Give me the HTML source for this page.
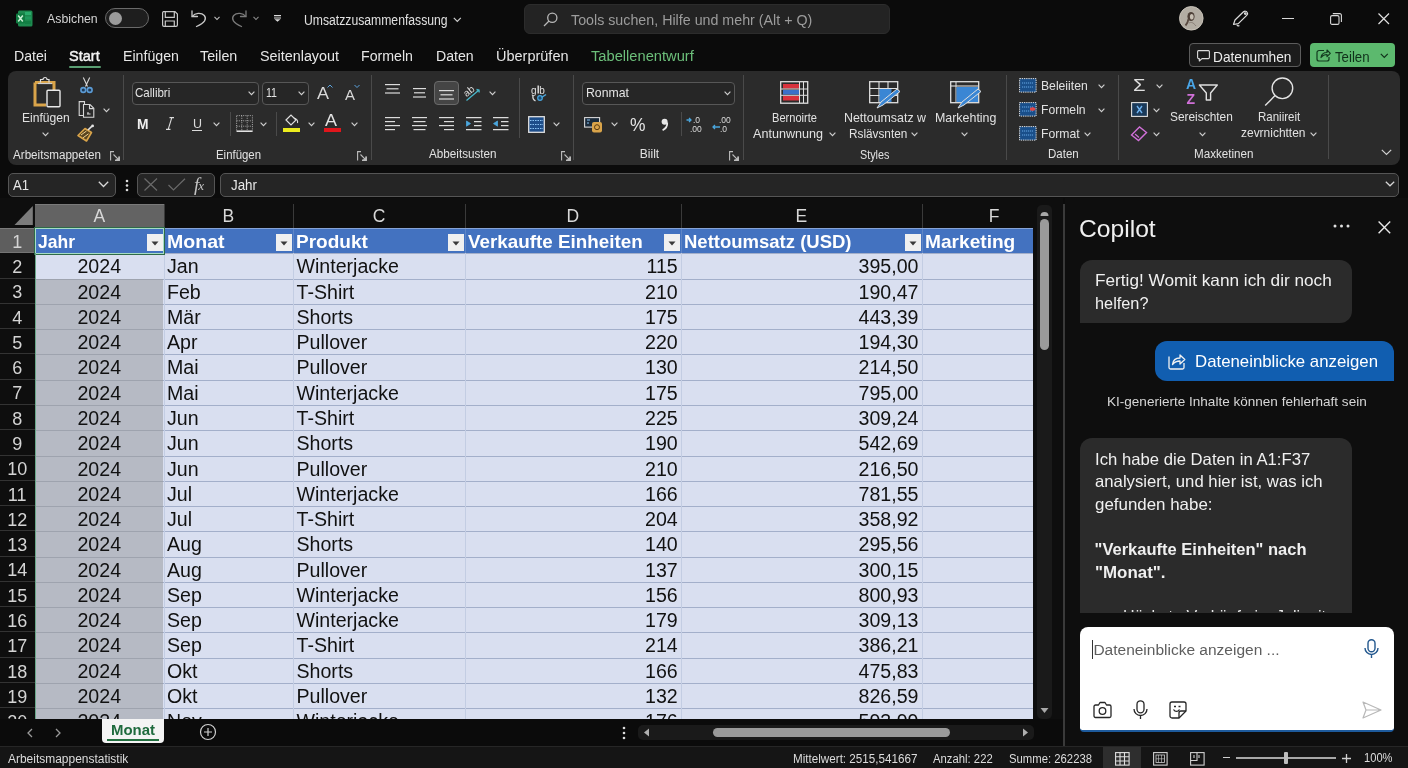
<!DOCTYPE html><html><head><meta charset="utf-8"><style>
*{margin:0;padding:0;box-sizing:border-box}
html,body{width:1408px;height:768px;overflow:hidden;background:#0b0b0b;font-family:"Liberation Sans",sans-serif;color:#e6e6e6}
.a{position:absolute}
.t{position:absolute;white-space:nowrap;line-height:1}
#w{position:absolute;left:0;top:0;width:1408px;height:768px;will-change:transform}
svg{position:absolute;overflow:visible}
</style></head><body><div id="w">
<div class="a" style="left:0;top:0;width:1408px;height:70px;background:#0b0b0b"></div>
<svg style="left:16px;top:10px" width="17" height="17">
<rect x="2" y="0.5" width="14.5" height="16" rx="1.5" fill="#1d8a4f"/>
<rect x="9" y="2" width="6" height="3" fill="#33c481" opacity="0.6"/>
<rect x="9" y="6.5" width="6" height="3" fill="#21a366" opacity="0.6"/>
<rect x="9" y="11" width="6" height="3" fill="#107c41" opacity="0.8"/>
<rect x="0" y="3.5" width="9" height="10" rx="1" fill="#107c41"/>
<path d="M2.2,5.5 L6.8,11.5 M6.8,5.5 L2.2,11.5" stroke="#c8f0d4" stroke-width="1.5"/>
</svg>
<div class="t" style="left:47.30px;top:11.84px;font-size:13.3px;color:#d4d4d4;transform:scaleX(0.9266);transform-origin:0 0;">Asbichen</div>
<div class="a" style="left:105px;top:8px;width:44px;height:20px;border-radius:10px;border:1.5px solid #6a6a6a;background:#1e1e1e"></div>
<div class="a" style="left:109px;top:11.5px;width:13px;height:13px;border-radius:50%;background:#9c9c9c"></div>
<svg style="left:162px;top:10.5px" width="16" height="16" fill="none" stroke="#c8c8c8" stroke-width="1.2">
<path d="M1.5,0.6 H13 L15.4,3 V14 A1.4,1.4 0 0 1 14,15.4 H2 A1.4,1.4 0 0 1 0.6,14 V2 A1.4,1.4 0 0 1 1.5,0.6 Z"/>
<path d="M3.3,0.6 V6.3 H12.3 V0.6"/><path d="M3.3,15.4 V10 H12.3 V15.4"/>
</svg>
<svg style="left:191px;top:10px" width="16" height="17" fill="none" stroke="#c8c8c8" stroke-width="1.3" stroke-linecap="round">
<path d="M1,1 V6.5 H6.5"/><path d="M1.3,6.3 C4,3 10,2 13.3,5.5 C16,9 14,12.5 5.5,16.5"/>
</svg>
<svg style="left:214px;top:16px" width="7" height="5"><path d="M0.5,0.8 L3,3.5 L5.5,0.8" stroke="#c0c0c0" stroke-width="1.1" fill="none"/></svg>
<svg style="left:231px;top:10px" width="16" height="17" fill="none" stroke="#7a7a7a" stroke-width="1.3" stroke-linecap="round">
<path d="M15,1 V6.5 H9.5"/><path d="M14.7,6.3 C12,3 6,2 2.7,5.5 C0,9 2,12.5 10.5,16.5"/>
</svg>
<svg style="left:252.5px;top:16px" width="7" height="5"><path d="M0.5,0.8 L3,3.5 L5.5,0.8" stroke="#8a8a8a" stroke-width="1.1" fill="none"/></svg>
<svg style="left:273.5px;top:15px" width="8" height="7"><path d="M0,0.7 H7 M0,3 H7" stroke="#dcdcdc" stroke-width="1.2"/><path d="M0.5,4.2 L3.5,6.8 L6.5,4.2 Z" fill="#dcdcdc"/></svg>
<div class="t" style="left:303.70px;top:13.15px;font-size:14px;color:#e0e0e0;transform:scaleX(0.8705);transform-origin:0 0;">Umsatzzusammenfassung</div>
<svg style="left:453px;top:16.5px" width="9" height="6"><path d="M0.8,0.8 L4.3,4.3 L7.8,0.8" stroke="#d0d0d0" stroke-width="1.2" fill="none"/></svg>
<div class="a" style="left:523.5px;top:4px;width:366px;height:29.5px;border-radius:6px;background:#232323;border:1px solid #2c2c2c"></div>
<svg style="left:543px;top:12px" width="15" height="15" fill="none" stroke="#b8b8b8" stroke-width="1.3">
<circle cx="9.3" cy="5.7" r="4.6"/><path d="M6,9 L1,14"/></svg>
<div class="t" style="left:570.80px;top:12.30px;font-size:15px;color:#9c9c9c;transform:scaleX(0.9505);transform-origin:0 0;">Tools suchen, Hilfe und mehr (Alt + Q)</div>
<svg style="left:1179px;top:6px" width="25" height="25">
<circle cx="12.3" cy="12.3" r="11.8" fill="#b3ada3" stroke="#cdc7bd" stroke-width="0.9"/>
<ellipse cx="12" cy="10.5" rx="3.6" ry="4.6" fill="#4e4038"/>
<ellipse cx="12.8" cy="10.8" rx="1.9" ry="2.8" fill="#c8c0b4"/>
<path d="M9.5,13 C9,16 8,18 6.5,19.5" stroke="#5a4a40" stroke-width="1.8" fill="none"/>
<path d="M10,17 C12,16 14,16 17,20" stroke="#8a8078" stroke-width="1" fill="none"/>
</svg>
<svg style="left:1232px;top:10px" width="17" height="17" fill="none" stroke="#dcdcdc" stroke-width="1.2" stroke-linejoin="round">
<path d="M1.5,14.5 L3,10 L11.5,1.8 C12.5,1 14.3,1 15,2 C15.8,3 15.5,4.5 14.7,5.3 L6.3,13.6 Z"/><path d="M5,14.8 C5,16 6.5,16.4 7.3,15.3"/><circle cx="13.3" cy="3.6" r="0.8"/>
</svg>
<div class="a" style="left:1282px;top:17.5px;width:11.5px;height:1.2px;background:#d8d8d8"></div>
<svg style="left:1329.5px;top:12.5px" width="12" height="12" fill="none" stroke="#d8d8d8" stroke-width="1.1">
<rect x="0.6" y="2.6" width="8.4" height="8.8" rx="1.5"/><path d="M2.8,0.6 H9.8 A1.6,1.6 0 0 1 11.4,2.2 V9"/></svg>
<svg style="left:1377.5px;top:12.5px" width="12" height="12"><path d="M0.5,0.5 L11,11 M11,0.5 L0.5,11" stroke="#e0e0e0" stroke-width="1.2"/></svg>
<div class="t" style="left:14.40px;top:48.48px;font-size:15.5px;color:#e6e6e6;transform:scaleX(0.9120);transform-origin:0 0;">Datei</div>
<div class="t" style="left:69.40px;top:48.48px;font-size:15.5px;color:#f4f4f4;transform:scaleX(0.9379);transform-origin:0 0;-webkit-text-stroke:0.45px #f4f4f4;">Start</div>
<div class="t" style="left:122.50px;top:48.48px;font-size:15.5px;color:#e6e6e6;transform:scaleX(0.9151);transform-origin:0 0;">Einfügen</div>
<div class="t" style="left:200.30px;top:48.48px;font-size:15.5px;color:#e6e6e6;transform:scaleX(0.9210);transform-origin:0 0;">Teilen</div>
<div class="t" style="left:259.70px;top:48.48px;font-size:15.5px;color:#e6e6e6;transform:scaleX(0.9260);transform-origin:0 0;">Seitenlayout</div>
<div class="t" style="left:361.10px;top:48.48px;font-size:15.5px;color:#e6e6e6;transform:scaleX(0.9147);transform-origin:0 0;">Formeln</div>
<div class="t" style="left:435.60px;top:48.48px;font-size:15.5px;color:#e6e6e6;transform:scaleX(0.9115);transform-origin:0 0;">Daten</div>
<div class="t" style="left:496.00px;top:48.48px;font-size:15.5px;color:#e6e6e6;transform:scaleX(0.9349);transform-origin:0 0;">Überprüfen</div>
<div class="t" style="left:590.80px;top:48.48px;font-size:15.5px;color:#6cbf7a;transform:scaleX(0.9468);transform-origin:0 0;">Tabellenentwurf</div>
<div class="a" style="left:69px;top:65.5px;width:32px;height:2px;border-radius:1px;background:#5a9e72"></div>
<div class="a" style="left:1189px;top:43px;width:112px;height:24px;border-radius:4px;border:1px solid #5c5c5c;background:#1c1c1c"></div>
<svg style="left:1197px;top:50px" width="13" height="12" fill="none" stroke="#dcdcdc" stroke-width="1.1" stroke-linejoin="round">
<path d="M1.5,0.6 H11.5 A1,1 0 0 1 12.4,1.6 V7.6 A1,1 0 0 1 11.5,8.6 H5 L2.3,11 V8.6 H1.5 A1,1 0 0 1 0.6,7.6 V1.6 A1,1 0 0 1 1.5,0.6 Z"/></svg>
<div class="t" style="left:1213.20px;top:48.80px;font-size:15px;color:#ececec;transform:scaleX(0.9128);transform-origin:0 0;">Datenumhen</div>
<div class="a" style="left:1309.5px;top:43px;width:85px;height:24px;border-radius:4px;background:#5cb96e"></div>
<svg style="left:1316px;top:48px" width="15" height="14" fill="none" stroke="#123a1e" stroke-width="1.2" stroke-linejoin="round">
<path d="M8,2.5 H3 A2,2 0 0 0 1,4.5 V11 A2,2 0 0 0 3,13 H11 A2,2 0 0 0 13,11 V9"/><path d="M5,9.5 C5.5,6 8,4.5 11,4.5 V2 L14.3,5.3 L11,8.6 V6.5 C8.5,6.5 6.5,7.5 5,9.5 Z"/></svg>
<div class="t" style="left:1334.80px;top:48.80px;font-size:15px;color:#10301a;transform:scaleX(0.8828);transform-origin:0 0;">Teilen</div>
<svg style="left:1380px;top:53px" width="9" height="6"><path d="M0.8,0.8 L4.3,4.3 L7.8,0.8" stroke="#10301a" stroke-width="1.2" fill="none"/></svg>
<div class="a" style="left:8px;top:70.5px;width:1392px;height:94px;border-radius:8px;background:#2b2b2b"></div>
<svg style="left:33px;top:77px" width="29" height="31">
<path d="M2,5.5 H21 V14 M2,5.5 V28 H13" stroke="#d9a44a" stroke-width="3" fill="none"/>
<path d="M7.5,5.5 V2.5 H10 A2,2 0 0 1 14,2.5 H16 V5.5" stroke="#e0e0e0" stroke-width="1.2" fill="none"/>
<path d="M5,6.5 H19" stroke="#cfcfcf" stroke-width="1.2"/>
<rect x="14" y="13.3" width="13" height="16.5" rx="1" stroke="#e8e8e8" stroke-width="1.4" fill="#2c2c2c"/>
</svg>
<div class="t" style="left:21.70px;top:110.70px;font-size:13px;color:#e2e2e2;transform:scaleX(0.9294);transform-origin:0 0;">Einfügen</div>
<svg style="left:42px;top:131.5px" width="7" height="5"><path d="M0.6,0.6 L3.5,3.6 L6.4,0.6" stroke="#cfcfcf" stroke-width="1.15" fill="none"/></svg>
<svg style="left:80px;top:77px" width="13" height="17" fill="none">
<path d="M3.3,0.5 L7.5,9.5 M9.7,0.5 L5.5,9.5" stroke="#d8d8d8" stroke-width="1.1"/>
<circle cx="3.3" cy="13" r="2.4" fill="#1e3a58" stroke="#5b9bd5" stroke-width="1.6"/><circle cx="9.7" cy="13" r="2.4" fill="#1e3a58" stroke="#5b9bd5" stroke-width="1.6"/>
</svg>
<svg style="left:78px;top:101px" width="17" height="17" fill="none" stroke="#d8d8d8" stroke-width="1.1">
<path d="M5,14.5 H1.2 V0.6 H6.5 V3"/><path d="M5.5,3.5 H12 L15.8,7.3 V16.2 H5.5 Z"/><path d="M11.5,3.8 V7.6 H15.5"/><path d="M9,13 H12.5 M10,11 V13"/>
</svg>
<svg style="left:102.5px;top:108px" width="7" height="5"><path d="M0.6,0.6 L3.5,3.6 L6.4,0.6" stroke="#cfcfcf" stroke-width="1.15" fill="none"/></svg>
<svg style="left:77px;top:124px" width="18" height="18">
<path d="M1,11.5 L8,4.5 L14.5,8.5 L9.5,17 Z" stroke="#d9a44a" stroke-width="1.6" fill="#5a4520" stroke-linejoin="round"/>
<path d="M4,11 L9.5,7 M6,13.8 L11.5,9.8" stroke="#f0d090" stroke-width="1"/>
<path d="M11,6 L15,2.2" stroke="#e4e4e4" stroke-width="1.7"/><circle cx="15.6" cy="1.9" r="1.4" fill="#e4e4e4"/>
</svg>
<div class="t" style="left:12.70px;top:148.54px;font-size:12px;color:#e2e2e2;transform:scaleX(0.9700);transform-origin:0 0;">Arbeitsmappeten</div>
<svg style="left:110px;top:151px" width="10" height="10" fill="none" stroke="#bdbdbd" stroke-width="1.1">
<path d="M0.6,9.4 V0.6 H4"/><path d="M9.4,5.5 V9.4 H5"/><path d="M3.5,3.5 L8.8,8.8 M8.8,5.6 V8.8 H5.6"/></svg>
<div class="a" style="left:122.5px;top:74.5px;width:1px;height:85.5px;background:#4a4a4a"></div>
<div class="a" style="left:131.5px;top:81.5px;width:127px;height:23px;border-radius:4px;border:1px solid #575757;background:#262626"></div>
<div class="t" style="left:134.50px;top:87.13px;font-size:12.6px;color:#e4e4e4;transform:scaleX(0.9167);transform-origin:0 0;">Callibri</div>
<svg style="left:248px;top:91px" width="7" height="5"><path d="M0.6,0.6 L3.5,3.6 L6.4,0.6" stroke="#cfcfcf" stroke-width="1.15" fill="none"/></svg>
<div class="a" style="left:262px;top:81.5px;width:46.5px;height:23px;border-radius:4px;border:1px solid #575757;background:#262626"></div>
<div class="t" style="left:266.30px;top:87.13px;font-size:12.6px;color:#e4e4e4;transform:scaleX(0.8410);transform-origin:0 0;">11</div>
<svg style="left:297.5px;top:91px" width="7" height="5"><path d="M0.6,0.6 L3.5,3.6 L6.4,0.6" stroke="#cfcfcf" stroke-width="1.15" fill="none"/></svg>
<div class="t" style="left:316.50px;top:85.11px;font-size:17px;color:#d8d8d8;transform:scaleX(1.0582);transform-origin:0 0;">A</div>
<svg style="left:327px;top:84px" width="6" height="5"><path d="M0.5,1 L3,3.5 L5.5,1" stroke="#5ba3dd" stroke-width="1" fill="none" transform="rotate(180 3 2.25)"/></svg>
<div class="t" style="left:345.00px;top:87.65px;font-size:14px;color:#d8d8d8;transform:scaleX(1.0708);transform-origin:0 0;">A</div>
<svg style="left:354px;top:84px" width="6" height="5"><path d="M0.5,1 L3,3.5 L5.5,1" stroke="#5ba3dd" stroke-width="1" fill="none"/></svg>
<div class="t" style="left:137.00px;top:116.65px;font-size:14px;color:#f0f0f0;font-weight:bold;transform:scaleX(0.9861);transform-origin:0 0;">M</div>
<svg style="left:165px;top:117px" width="10" height="13"><path d="M4.5,0.6 H9 M1,12.4 H5.5 M6.8,0.6 L3.2,12.4" stroke="#dcdcdc" stroke-width="1.1" fill="none"/></svg>
<div class="t" style="left:192.50px;top:116.50px;font-size:13px;color:#dcdcdc;transform:scaleX(0.9586);transform-origin:0 0;">U</div>
<div class="a" style="left:191.5px;top:130px;width:10px;height:1.2px;background:#dcdcdc"></div>
<svg style="left:213px;top:122px" width="7" height="5"><path d="M0.6,0.6 L3.5,3.6 L6.4,0.6" stroke="#cfcfcf" stroke-width="1.15" fill="none"/></svg>
<div class="a" style="left:229.5px;top:112px;width:1px;height:24px;background:#4a4a4a"></div>
<svg style="left:235.5px;top:115px" width="17" height="17" fill="none">
<path d="M0.6,0.6 H16.4 V16.4 H0.6 Z M5.8,0.6 V16.4 M11.2,0.6 V16.4 M0.6,5.8 H16.4 M0.6,11.2 H16.4" stroke="#b8b8b8" stroke-width="0.9" stroke-dasharray="1 1.2"/>
<path d="M0.6,16.2 H16.4" stroke="#e8e8e8" stroke-width="1.5"/></svg>
<svg style="left:259.5px;top:122px" width="7" height="5"><path d="M0.6,0.6 L3.5,3.6 L6.4,0.6" stroke="#cfcfcf" stroke-width="1.15" fill="none"/></svg>
<div class="a" style="left:275.5px;top:112px;width:1px;height:24px;background:#4a4a4a"></div>
<svg style="left:283px;top:113px" width="18" height="20">
<path d="M3,7 L8,2 L13,7 L8,12 Z" stroke="#e0e0e0" stroke-width="1.2" fill="none"/><path d="M11,5 C14,6 15,8 14.5,10" stroke="#e0e0e0" stroke-width="1.1" fill="none"/>
<rect x="0" y="15" width="17" height="4" fill="#ecec1e"/></svg>
<svg style="left:307.5px;top:122px" width="7" height="5"><path d="M0.6,0.6 L3.5,3.6 L6.4,0.6" stroke="#cfcfcf" stroke-width="1.15" fill="none"/></svg>
<div class="t" style="left:325.00px;top:113.46px;font-size:16px;color:#e4e4e4;transform:scaleX(1.1244);transform-origin:0 0;">A</div>
<div class="a" style="left:324px;top:128px;width:17px;height:4px;background:#e0161c"></div>
<svg style="left:350.5px;top:122px" width="7" height="5"><path d="M0.6,0.6 L3.5,3.6 L6.4,0.6" stroke="#cfcfcf" stroke-width="1.15" fill="none"/></svg>
<div class="t" style="left:215.50px;top:148.74px;font-size:12px;color:#e2e2e2;transform:scaleX(0.9499);transform-origin:0 0;">Einfügen</div>
<svg style="left:357px;top:151px" width="10" height="10" fill="none" stroke="#bdbdbd" stroke-width="1.1">
<path d="M0.6,9.4 V0.6 H4"/><path d="M9.4,5.5 V9.4 H5"/><path d="M3.5,3.5 L8.8,8.8 M8.8,5.6 V8.8 H5.6"/></svg>
<div class="a" style="left:371px;top:74.5px;width:1px;height:85.5px;background:#4a4a4a"></div>
<svg style="left:384.5px;top:84px" width="15" height="14.600000000000001" fill="none" stroke="#dcdcdc" stroke-width="1.2"><path d="M0.0,0.6 H15.0"/><path d="M1.5,4.8 H13.5"/><path d="M0.0,9.0 H15.0"/></svg>
<svg style="left:411.5px;top:87.5px" width="15" height="14.600000000000001" fill="none" stroke="#dcdcdc" stroke-width="1.2"><path d="M1.0,0.6 H14.0"/><path d="M2.0,4.8 H13.0"/><path d="M1.0,9.0 H14.0"/></svg>
<div class="a" style="left:433.5px;top:81px;width:25px;height:24px;border-radius:4px;border:1px solid #6a6a6a;background:#454545"></div>
<svg style="left:438.5px;top:90px" width="15" height="14.600000000000001" fill="none" stroke="#dcdcdc" stroke-width="1.2"><path d="M0.0,0.6 H15.0"/><path d="M1.5,4.8 H13.5"/><path d="M0.0,9.0 H15.0"/></svg>
<svg style="left:464px;top:84px" width="18" height="18" fill="none">
<text x="0" y="10" font-size="10" fill="#e0e0e0" font-family="Liberation Sans" transform="rotate(-38 6 8)">ab</text>
<path d="M2.5,16.5 L15,6 M12.5,5.5 L15,6 L15.2,8.5" stroke="#49b6c9" stroke-width="1.3"/></svg>
<svg style="left:489px;top:91px" width="7" height="5"><path d="M0.6,0.6 L3.5,3.6 L6.4,0.6" stroke="#cfcfcf" stroke-width="1.15" fill="none"/></svg>
<svg style="left:384.5px;top:117px" width="15" height="18.0" fill="none" stroke="#dcdcdc" stroke-width="1.2"><path d="M0.0,0.6 H15.0"/><path d="M0.0,4.6 H10.0"/><path d="M0.0,8.6 H15.0"/><path d="M0.0,12.6 H10.0"/></svg>
<svg style="left:411.5px;top:117px" width="15" height="18.0" fill="none" stroke="#dcdcdc" stroke-width="1.2"><path d="M0.0,0.6 H15.0"/><path d="M1.5,4.6 H13.5"/><path d="M0.0,8.6 H15.0"/><path d="M1.5,12.6 H13.5"/></svg>
<svg style="left:438.5px;top:117px" width="15" height="18.0" fill="none" stroke="#dcdcdc" stroke-width="1.2"><path d="M0.0,0.6 H15.0"/><path d="M5.0,4.6 H15.0"/><path d="M0.0,8.6 H15.0"/><path d="M5.0,12.6 H15.0"/></svg>
<svg style="left:466px;top:117px" width="16" height="15" fill="none" stroke="#dcdcdc" stroke-width="1.2">
<path d="M0,0.6 H15.5 M8,4.6 H15.5 M8,8.6 H15.5 M0,12.6 H15.5"/><path d="M0.5,4 L4.5,6.6 L0.5,9.2 Z" fill="#4aa6dd" stroke="#4aa6dd" stroke-width="0.8"/></svg>
<svg style="left:493px;top:117px" width="16" height="15" fill="none" stroke="#dcdcdc" stroke-width="1.2">
<path d="M0,0.6 H15.5 M8,4.6 H15.5 M8,8.6 H15.5 M0,12.6 H15.5"/><path d="M4.5,4 L0.5,6.6 L4.5,9.2 Z" fill="#4aa6dd" stroke="#4aa6dd" stroke-width="0.8"/></svg>
<div class="a" style="left:518.5px;top:78px;width:1px;height:60px;background:#4a4a4a"></div>
<svg style="left:530.5px;top:85px" width="16" height="17" fill="none">
<text x="0" y="8.5" font-size="10" fill="#e0e0e0" font-family="Liberation Sans">g</text><text x="8.2" y="8.5" font-size="10" fill="#e0e0e0" font-family="Liberation Sans">b</text>
<path d="M7.2,0.5 V8.5" stroke="#f0f0f0" stroke-width="1.3"/>
<path d="M2.2,10.5 A4,4 0 0 0 4.5,15.8" stroke="#e0e0e0" stroke-width="1.3"/>
<circle cx="9" cy="13" r="2.3" fill="#1a4a70" stroke="#4aa6dd" stroke-width="1.2"/><path d="M10.5,12.5 L15,9.5" stroke="#4aa6dd" stroke-width="1.5"/></svg>
<svg style="left:528px;top:115.5px" width="17" height="17" fill="none">
<rect x="0.7" y="0.7" width="15.6" height="15.6" stroke="#e0e0e0" stroke-width="1.3" fill="#1e4e8a"/>
<path d="M2,4.5 H15 M2,8.5 H15 M2,12.5 H15" stroke="#8cc4f4" stroke-width="1" stroke-dasharray="1.5 1"/></svg>
<svg style="left:553px;top:122px" width="7" height="5"><path d="M0.6,0.6 L3.5,3.6 L6.4,0.6" stroke="#cfcfcf" stroke-width="1.15" fill="none"/></svg>
<div class="t" style="left:429.40px;top:148.24px;font-size:12px;color:#e2e2e2;transform:scaleX(0.9743);transform-origin:0 0;">Abbeitsusten</div>
<svg style="left:561px;top:151px" width="10" height="10" fill="none" stroke="#bdbdbd" stroke-width="1.1">
<path d="M0.6,9.4 V0.6 H4"/><path d="M9.4,5.5 V9.4 H5"/><path d="M3.5,3.5 L8.8,8.8 M8.8,5.6 V8.8 H5.6"/></svg>
<div class="a" style="left:573px;top:74.5px;width:1px;height:85.5px;background:#4a4a4a"></div>
<div class="a" style="left:581.5px;top:81.5px;width:153.5px;height:23px;border-radius:4px;border:1px solid #575757;background:#262626"></div>
<div class="t" style="left:585.50px;top:87.33px;font-size:12.6px;color:#e4e4e4;transform:scaleX(0.9746);transform-origin:0 0;">Ronmat</div>
<svg style="left:724px;top:91px" width="7" height="5"><path d="M0.6,0.6 L3.5,3.6 L6.4,0.6" stroke="#cfcfcf" stroke-width="1.15" fill="none"/></svg>
<svg style="left:584px;top:117px" width="19" height="16">
<rect x="0.6" y="0.6" width="15" height="9.5" stroke="#d8d8d8" stroke-width="1.1" fill="#1a2a3a"/><path d="M3,3 H6 M3,6 H5" stroke="#8cc4f4" stroke-width="1"/>
<rect x="8" y="5" width="10" height="10.5" rx="2" fill="#d9a44a"/><circle cx="13" cy="10.2" r="2.5" stroke="#5a3a10" stroke-width="1" fill="none"/></svg>
<svg style="left:611px;top:122px" width="7" height="5"><path d="M0.6,0.6 L3.5,3.6 L6.4,0.6" stroke="#cfcfcf" stroke-width="1.15" fill="none"/></svg>
<div class="t" style="left:629.50px;top:115.76px;font-size:18px;color:#e4e4e4;transform:scaleX(0.9685);transform-origin:0 0;">%</div>
<svg style="left:660px;top:118px" width="9" height="14"><circle cx="4.6" cy="3.8" r="3" fill="#e8e8e8"/><path d="M7.2,4.5 C7.5,8 6,10.5 2.6,12.2" stroke="#e8e8e8" stroke-width="1.8" fill="none"/></svg>
<div class="a" style="left:680.5px;top:112px;width:1px;height:24px;background:#4a4a4a"></div>
<svg style="left:686px;top:115px" width="20" height="18">
<text x="7" y="8" font-size="8.5" fill="#dcdcdc" font-family="Liberation Sans">.0</text><text x="4" y="16.5" font-size="8.5" fill="#dcdcdc" font-family="Liberation Sans">.00</text>
<path d="M0.5,5 L5,5 M3,3 L5,5 L3,7" stroke="#4aa6dd" stroke-width="1.3" fill="none"/></svg>
<svg style="left:712px;top:115px" width="20" height="18">
<text x="7" y="8" font-size="8.5" fill="#dcdcdc" font-family="Liberation Sans">.00</text><text x="8" y="16.5" font-size="8.5" fill="#dcdcdc" font-family="Liberation Sans">.0</text>
<path d="M1,12 L8,12 M3,10 L1,12 L3,14" stroke="#4aa6dd" stroke-width="1.3" fill="none"/></svg>
<div class="t" style="left:639.80px;top:147.94px;font-size:12px;color:#e2e2e2;">Biilt</div>
<svg style="left:729px;top:151px" width="10" height="10" fill="none" stroke="#bdbdbd" stroke-width="1.1">
<path d="M0.6,9.4 V0.6 H4"/><path d="M9.4,5.5 V9.4 H5"/><path d="M3.5,3.5 L8.8,8.8 M8.8,5.6 V8.8 H5.6"/></svg>
<div class="a" style="left:743px;top:74.5px;width:1px;height:85.5px;background:#4a4a4a"></div>
<svg style="left:780px;top:80.5px" width="29" height="23">
<rect x="0.7" y="0.7" width="27" height="21.5" stroke="#e0e0e0" stroke-width="1.3" fill="#2a2a2a"/>
<rect x="3" y="3" width="16" height="4.5" fill="#d8323c"/><rect x="3" y="9" width="16" height="4.5" fill="#3a70c8"/><rect x="3" y="15" width="16" height="4.5" fill="#d8323c"/>
<path d="M19.5,1 V22 M23.5,1 V22 M1,8 H27.5 M1,14.3 H27.5" stroke="#e0e0e0" stroke-width="1"/></svg>
<div class="t" style="left:771.60px;top:111.66px;font-size:12.8px;color:#e2e2e2;transform:scaleX(0.8664);transform-origin:0 0;">Bernoirte</div>
<div class="t" style="left:753.40px;top:127.66px;font-size:12.8px;color:#e2e2e2;transform:scaleX(0.9835);transform-origin:0 0;">Antunwnung</div>
<svg style="left:829px;top:131.5px" width="7" height="5"><path d="M0.6,0.6 L3.5,3.6 L6.4,0.6" stroke="#cfcfcf" stroke-width="1.15" fill="none"/></svg>
<svg style="left:869px;top:80.5px" width="33" height="29">
<rect x="0.7" y="0.7" width="28" height="21" stroke="#e0e0e0" stroke-width="1.3" fill="none"/>
<path d="M1,7.5 H28.5 M1,14.5 H28.5 M10,1 V21.5 M19,1 V21.5" stroke="#e0e0e0" stroke-width="1.1"/>
<rect x="10.5" y="8" width="12" height="13" fill="#3a86d4"/>
<path d="M8,27 L12,21 L28,8 L31,10.5 L14,24 Z" fill="#3a86d4" stroke="#e0e0e0" stroke-width="1"/></svg>
<div class="t" style="left:843.50px;top:111.66px;font-size:12.8px;color:#e2e2e2;transform:scaleX(0.9687);transform-origin:0 0;">Nettoumsatz w</div>
<div class="t" style="left:848.90px;top:127.66px;font-size:12.8px;color:#e2e2e2;transform:scaleX(0.9207);transform-origin:0 0;">Rslävsnten</div>
<svg style="left:911px;top:131.5px" width="7" height="5"><path d="M0.6,0.6 L3.5,3.6 L6.4,0.6" stroke="#cfcfcf" stroke-width="1.15" fill="none"/></svg>
<svg style="left:950px;top:80.5px" width="33" height="29">
<rect x="0.7" y="0.7" width="28" height="21" stroke="#e0e0e0" stroke-width="1.3" fill="none"/>
<path d="M1,5 H28.5" stroke="#e0e0e0" stroke-width="1.1"/><path d="M6,1 V21.5" stroke="#e0e0e0" stroke-width="1"/>
<rect x="6.5" y="6" width="21.5" height="15" fill="#3a86d4"/>
<path d="M8,27 L12,21 L28,8 L31,10.5 L14,24 Z" fill="#3a86d4" stroke="#e0e0e0" stroke-width="1"/></svg>
<div class="t" style="left:934.60px;top:111.66px;font-size:12.8px;color:#e2e2e2;transform:scaleX(0.9697);transform-origin:0 0;">Markehting</div>
<svg style="left:961px;top:131.5px" width="7" height="5"><path d="M0.6,0.6 L3.5,3.6 L6.4,0.6" stroke="#cfcfcf" stroke-width="1.15" fill="none"/></svg>
<div class="t" style="left:859.80px;top:148.74px;font-size:12px;color:#e2e2e2;transform:scaleX(0.8997);transform-origin:0 0;">Styles</div>
<div class="a" style="left:1006px;top:74.5px;width:1px;height:85.5px;background:#4a4a4a"></div>
<svg style="left:1019px;top:78px" width="18" height="15">
<rect x="0.6" y="0.6" width="16.5" height="13.5" stroke="#e0e0e0" stroke-width="1" stroke-dasharray="1.3 0.9" fill="#1a4f8a"/>
<path d="M3,5 H14 M3,9 H14" stroke="#6fb2ef" stroke-width="0.9" stroke-dasharray="1.2 0.8"/></svg>
<div class="t" style="left:1040.60px;top:79.20px;font-size:13px;color:#e0e0e0;transform:scaleX(0.9364);transform-origin:0 0;">Beleiiten</div>
<svg style="left:1098px;top:83.5px" width="7" height="5"><path d="M0.6,0.6 L3.5,3.6 L6.4,0.6" stroke="#cfcfcf" stroke-width="1.15" fill="none"/></svg>
<svg style="left:1019px;top:102px" width="18" height="15">
<rect x="0.6" y="0.6" width="16.5" height="13.5" stroke="#e0e0e0" stroke-width="1" stroke-dasharray="1.3 0.9" fill="#1a4f8a"/>
<path d="M3,5 H14 M3,9 H14" stroke="#6fb2ef" stroke-width="0.9" stroke-dasharray="1.2 0.8"/><path d="M11,6 C13,4.5 16,5 16.5,7 C16,9 13,9.5 11,8 Z" fill="#e0484a"/></svg>
<div class="t" style="left:1040.60px;top:103.20px;font-size:13px;color:#e0e0e0;transform:scaleX(0.9354);transform-origin:0 0;">Formeln</div>
<svg style="left:1098px;top:107.5px" width="7" height="5"><path d="M0.6,0.6 L3.5,3.6 L6.4,0.6" stroke="#cfcfcf" stroke-width="1.15" fill="none"/></svg>
<svg style="left:1019px;top:126px" width="18" height="15">
<rect x="0.6" y="0.6" width="16.5" height="13.5" stroke="#e0e0e0" stroke-width="1" stroke-dasharray="1.3 0.9" fill="#1a4f8a"/>
<path d="M3,5 H14 M3,9 H14" stroke="#6fb2ef" stroke-width="0.9" stroke-dasharray="1.2 0.8"/></svg>
<div class="t" style="left:1040.60px;top:127.10px;font-size:13px;color:#e0e0e0;transform:scaleX(0.9399);transform-origin:0 0;">Format</div>
<svg style="left:1084px;top:131.5px" width="7" height="5"><path d="M0.6,0.6 L3.5,3.6 L6.4,0.6" stroke="#cfcfcf" stroke-width="1.15" fill="none"/></svg>
<div class="t" style="left:1047.70px;top:148.44px;font-size:12px;color:#e2e2e2;transform:scaleX(0.9587);transform-origin:0 0;">Daten</div>
<div class="a" style="left:1118px;top:74.5px;width:1px;height:85.5px;background:#4a4a4a"></div>
<div class="t" style="left:1132.50px;top:78.46px;font-size:16px;color:#e0e0e0;transform:scaleX(1.2637);transform-origin:0 0;">Σ</div>
<svg style="left:1155.5px;top:83.5px" width="7" height="5"><path d="M0.6,0.6 L3.5,3.6 L6.4,0.6" stroke="#cfcfcf" stroke-width="1.15" fill="none"/></svg>
<svg style="left:1131px;top:101.5px" width="17" height="15">
<rect x="0.6" y="0.6" width="15.8" height="13.8" stroke="#e0e0e0" stroke-width="1.1" fill="#1a3a5a"/>
<path d="M6,4 L11,11 M11,4 L6,11" stroke="#6fb2ef" stroke-width="1.4"/></svg>
<svg style="left:1153px;top:107.5px" width="7" height="5"><path d="M0.6,0.6 L3.5,3.6 L6.4,0.6" stroke="#cfcfcf" stroke-width="1.15" fill="none"/></svg>
<svg style="left:1130px;top:125px" width="18" height="17">
<path d="M1.5,10 L9.5,2 L16.5,7.5 L8.5,15.5 Z" stroke="#d070d8" stroke-width="1.4" fill="none"/><path d="M5,9 L9,12.5" stroke="#d070d8" stroke-width="1.2"/></svg>
<svg style="left:1153px;top:131.5px" width="7" height="5"><path d="M0.6,0.6 L3.5,3.6 L6.4,0.6" stroke="#cfcfcf" stroke-width="1.15" fill="none"/></svg>
<svg style="left:1186px;top:76px" width="35" height="30">
<text x="0" y="13" font-size="14" font-weight="bold" fill="#4aa6e8" font-family="Liberation Sans">A</text>
<text x="0.5" y="27.5" font-size="14" font-weight="bold" fill="#d070d8" font-family="Liberation Sans">Z</text>
<path d="M13.4,9 H31.3 L24.6,17 V24 H20.3 V17 Z" stroke="#e0e0e0" stroke-width="1.4" fill="none" stroke-linejoin="round"/></svg>
<div class="t" style="left:1170.40px;top:110.56px;font-size:12.8px;color:#e2e2e2;transform:scaleX(0.9290);transform-origin:0 0;">Sereischten</div>
<svg style="left:1198.5px;top:131.5px" width="7" height="5"><path d="M0.6,0.6 L3.5,3.6 L6.4,0.6" stroke="#cfcfcf" stroke-width="1.15" fill="none"/></svg>
<svg style="left:1264px;top:76px" width="30" height="31" fill="none" stroke="#e4e4e4" stroke-width="1.4">
<circle cx="18.4" cy="12.3" r="10.3"/><path d="M11,19.6 L1.2,29.5"/></svg>
<div class="t" style="left:1258.00px;top:111.46px;font-size:12.8px;color:#e2e2e2;transform:scaleX(0.8988);transform-origin:0 0;">Raniireit</div>
<div class="t" style="left:1241.10px;top:127.46px;font-size:12.8px;color:#e2e2e2;transform:scaleX(0.9346);transform-origin:0 0;">zevrnichtten</div>
<svg style="left:1310px;top:131.5px" width="7" height="5"><path d="M0.6,0.6 L3.5,3.6 L6.4,0.6" stroke="#cfcfcf" stroke-width="1.15" fill="none"/></svg>
<div class="t" style="left:1193.60px;top:148.04px;font-size:12px;color:#e2e2e2;transform:scaleX(0.9696);transform-origin:0 0;">Maxketinen</div>
<div class="a" style="left:1328px;top:74.5px;width:1px;height:84.5px;background:#4a4a4a"></div>
<svg style="left:1380.5px;top:148.5px" width="11" height="7"><path d="M0.8,0.8 L5.5,5.5 L10.2,0.8" stroke="#d0d0d0" stroke-width="1.2" fill="none"/></svg>
<div class="a" style="left:8px;top:172.5px;width:107.5px;height:24px;border-radius:5px;border:1px solid #555;background:#252525"></div>
<div class="t" style="left:13.00px;top:178.15px;font-size:14px;color:#e8e8e8;transform:scaleX(0.9343);transform-origin:0 0;">A1</div>
<svg style="left:98px;top:181px" width="11" height="7"><path d="M0.8,0.8 L5.5,5.5 L10.2,0.8" stroke="#d8d8d8" stroke-width="1.3" fill="none"/></svg>
<svg style="left:124.5px;top:178.5px" width="4" height="13"><circle cx="2" cy="2" r="1.3" fill="#dcdcdc"/><circle cx="2" cy="6.5" r="1.3" fill="#dcdcdc"/><circle cx="2" cy="11" r="1.3" fill="#dcdcdc"/></svg>
<div class="a" style="left:137px;top:172.5px;width:78px;height:24px;border-radius:5px;border:1px solid #555;background:#252525"></div>
<svg style="left:144px;top:178px" width="14" height="13"><path d="M0.5,0.5 L13,12.5 M13,0.5 L0.5,12.5" stroke="#6a6a6a" stroke-width="1.2"/></svg>
<svg style="left:167.5px;top:178px" width="18" height="13"><path d="M0.5,7 L5.5,12 L17,0.8" stroke="#6a6a6a" stroke-width="1.2" fill="none"/></svg>
<div class="t" style="left:194px;top:175px;font-size:19px;color:#c4c4c4;font-family:'Liberation Serif',serif;font-style:italic">f<span style="font-size:13px;position:relative;left:-1px;top:-1px">x</span></div>
<div class="a" style="left:220px;top:172.5px;width:1179px;height:24px;border-radius:5px;border:1px solid #555;background:#252525"></div>
<div class="t" style="left:231.00px;top:178.15px;font-size:14px;color:#e8e8e8;transform:scaleX(0.9546);transform-origin:0 0;">Jahr</div>
<svg style="left:1385px;top:181px" width="10" height="6"><path d="M0.8,0.8 L5,4.8 L9.2,0.8" stroke="#d8d8d8" stroke-width="1.2" fill="none"/></svg>
<div class="a" style="left:0;top:198px;width:1063px;height:521px;background:#0e0e0e"></div>
<div class="a" style="left:35px;top:203.5px;width:128.5px;height:24.5px;background:#636363;border-top:1px solid #7a7a7a;border-bottom:1px solid #3d6e50"></div>
<div class="t" style="left:93.41px;top:208.39px;font-size:17.5px;color:#d8d8d8;">A</div>
<div class="a" style="left:163.5px;top:203.5px;width:129.5px;height:24.5px;background:#0e0e0e"></div>
<div class="t" style="left:222.41px;top:208.39px;font-size:17.5px;color:#d8d8d8;">B</div>
<div class="a" style="left:163.5px;top:204px;width:1px;height:24px;background:#3a3a3a"></div>
<div class="a" style="left:293px;top:203.5px;width:172px;height:24.5px;background:#0e0e0e"></div>
<div class="t" style="left:372.68px;top:208.39px;font-size:17.5px;color:#d8d8d8;">C</div>
<div class="a" style="left:293px;top:204px;width:1px;height:24px;background:#3a3a3a"></div>
<div class="a" style="left:465px;top:203.5px;width:215.5px;height:24.5px;background:#0e0e0e"></div>
<div class="t" style="left:566.43px;top:208.39px;font-size:17.5px;color:#d8d8d8;">D</div>
<div class="a" style="left:465px;top:204px;width:1px;height:24px;background:#3a3a3a"></div>
<div class="a" style="left:680.5px;top:203.5px;width:241.5px;height:24.5px;background:#0e0e0e"></div>
<div class="t" style="left:795.41px;top:208.39px;font-size:17.5px;color:#d8d8d8;">E</div>
<div class="a" style="left:680.5px;top:204px;width:1px;height:24px;background:#3a3a3a"></div>
<div class="a" style="left:922px;top:203.5px;width:111px;height:24.5px;background:#0e0e0e"></div>
<div class="t" style="left:988.65px;top:208.39px;font-size:17.5px;color:#d8d8d8;">F</div>
<div class="a" style="left:922px;top:204px;width:1px;height:24px;background:#3a3a3a"></div>
<svg style="left:0;top:203px" width="35" height="25"><polygon points="32.8,3 32.8,22 14.5,22" fill="#7c7c7c"/></svg>
<div class="a" style="left:0;top:228.00px;width:35px;height:25.28px;background:#5e5e5e;border-top:1px solid #7a7a7a;border-bottom:1px solid #747474"></div>
<div class="t" style="left:12.19px;top:232.76px;font-size:18px;color:#d4d4d4;">1</div>
<div class="a" style="left:0;top:253.28px;width:35px;height:25.28px;background:#0e0e0e;border-bottom:1px solid #333"></div>
<div class="t" style="left:12.19px;top:258.04px;font-size:18px;color:#d4d4d4;">2</div>
<div class="a" style="left:0;top:278.56px;width:35px;height:25.28px;background:#0e0e0e;border-bottom:1px solid #333"></div>
<div class="t" style="left:12.19px;top:283.32px;font-size:18px;color:#d4d4d4;">3</div>
<div class="a" style="left:0;top:303.84px;width:35px;height:25.28px;background:#0e0e0e;border-bottom:1px solid #333"></div>
<div class="t" style="left:12.19px;top:308.60px;font-size:18px;color:#d4d4d4;">4</div>
<div class="a" style="left:0;top:329.12px;width:35px;height:25.28px;background:#0e0e0e;border-bottom:1px solid #333"></div>
<div class="t" style="left:12.19px;top:333.88px;font-size:18px;color:#d4d4d4;">5</div>
<div class="a" style="left:0;top:354.40px;width:35px;height:25.28px;background:#0e0e0e;border-bottom:1px solid #333"></div>
<div class="t" style="left:12.19px;top:359.16px;font-size:18px;color:#d4d4d4;">6</div>
<div class="a" style="left:0;top:379.68px;width:35px;height:25.28px;background:#0e0e0e;border-bottom:1px solid #333"></div>
<div class="t" style="left:12.19px;top:384.44px;font-size:18px;color:#d4d4d4;">7</div>
<div class="a" style="left:0;top:404.96px;width:35px;height:25.28px;background:#0e0e0e;border-bottom:1px solid #333"></div>
<div class="t" style="left:12.19px;top:409.72px;font-size:18px;color:#d4d4d4;">8</div>
<div class="a" style="left:0;top:430.24px;width:35px;height:25.28px;background:#0e0e0e;border-bottom:1px solid #333"></div>
<div class="t" style="left:12.19px;top:435.00px;font-size:18px;color:#d4d4d4;">9</div>
<div class="a" style="left:0;top:455.52px;width:35px;height:25.28px;background:#0e0e0e;border-bottom:1px solid #333"></div>
<div class="t" style="left:7.19px;top:460.28px;font-size:18px;color:#d4d4d4;">10</div>
<div class="a" style="left:0;top:480.80px;width:35px;height:25.28px;background:#0e0e0e;border-bottom:1px solid #333"></div>
<div class="t" style="left:7.86px;top:485.56px;font-size:18px;color:#d4d4d4;">11</div>
<div class="a" style="left:0;top:506.08px;width:35px;height:25.28px;background:#0e0e0e;border-bottom:1px solid #333"></div>
<div class="t" style="left:7.19px;top:510.84px;font-size:18px;color:#d4d4d4;">12</div>
<div class="a" style="left:0;top:531.36px;width:35px;height:25.28px;background:#0e0e0e;border-bottom:1px solid #333"></div>
<div class="t" style="left:7.19px;top:536.12px;font-size:18px;color:#d4d4d4;">13</div>
<div class="a" style="left:0;top:556.64px;width:35px;height:25.28px;background:#0e0e0e;border-bottom:1px solid #333"></div>
<div class="t" style="left:7.19px;top:561.40px;font-size:18px;color:#d4d4d4;">14</div>
<div class="a" style="left:0;top:581.92px;width:35px;height:25.28px;background:#0e0e0e;border-bottom:1px solid #333"></div>
<div class="t" style="left:7.19px;top:586.68px;font-size:18px;color:#d4d4d4;">15</div>
<div class="a" style="left:0;top:607.20px;width:35px;height:25.28px;background:#0e0e0e;border-bottom:1px solid #333"></div>
<div class="t" style="left:7.19px;top:611.96px;font-size:18px;color:#d4d4d4;">16</div>
<div class="a" style="left:0;top:632.48px;width:35px;height:25.28px;background:#0e0e0e;border-bottom:1px solid #333"></div>
<div class="t" style="left:7.19px;top:637.24px;font-size:18px;color:#d4d4d4;">17</div>
<div class="a" style="left:0;top:657.76px;width:35px;height:25.28px;background:#0e0e0e;border-bottom:1px solid #333"></div>
<div class="t" style="left:7.19px;top:662.52px;font-size:18px;color:#d4d4d4;">18</div>
<div class="a" style="left:0;top:683.04px;width:35px;height:25.28px;background:#0e0e0e;border-bottom:1px solid #333"></div>
<div class="t" style="left:7.19px;top:687.80px;font-size:18px;color:#d4d4d4;">19</div>
<div class="a" style="left:0;top:708.32px;width:35px;height:25.28px;background:#0e0e0e;border-bottom:1px solid #333"></div>
<div class="t" style="left:7.19px;top:713.08px;font-size:18px;color:#d4d4d4;">20</div>
<div class="a" style="left:35px;top:228.00px;width:998px;height:25.28px;background:#4372c0;border-top:1px solid #86a3d6"></div>
<div class="a" style="left:163.5px;top:229.00px;width:1px;height:24.28px;background:#5f86c6"></div>
<div class="a" style="left:293px;top:229.00px;width:1px;height:24.28px;background:#5f86c6"></div>
<div class="a" style="left:465px;top:229.00px;width:1px;height:24.28px;background:#5f86c6"></div>
<div class="a" style="left:680.5px;top:229.00px;width:1px;height:24.28px;background:#5f86c6"></div>
<div class="a" style="left:922px;top:229.00px;width:1px;height:24.28px;background:#5f86c6"></div>
<div class="t" style="left:38.00px;top:232.32px;font-size:19px;color:#ffffff;font-weight:bold;transform:scaleX(0.9219);transform-origin:0 0;">Jahr</div>
<div class="a" style="left:146.5px;top:234.00px;width:16px;height:17px;background:#f0f0f0"></div>
<svg style="left:146.5px;top:234.00px" width="16" height="17"><polygon points="4.5,7.5 11.5,7.5 8,11.5" fill="#3a3a3a"/></svg>
<div class="t" style="left:166.50px;top:232.32px;font-size:19px;color:#ffffff;font-weight:bold;transform:scaleX(1.0280);transform-origin:0 0;">Monat</div>
<div class="a" style="left:276px;top:234.00px;width:16px;height:17px;background:#f0f0f0"></div>
<svg style="left:276px;top:234.00px" width="16" height="17"><polygon points="4.5,7.5 11.5,7.5 8,11.5" fill="#3a3a3a"/></svg>
<div class="t" style="left:296.00px;top:232.32px;font-size:19px;color:#ffffff;font-weight:bold;">Produkt</div>
<div class="a" style="left:448px;top:234.00px;width:16px;height:17px;background:#f0f0f0"></div>
<svg style="left:448px;top:234.00px" width="16" height="17"><polygon points="4.5,7.5 11.5,7.5 8,11.5" fill="#3a3a3a"/></svg>
<div class="t" style="left:468.00px;top:232.32px;font-size:19px;color:#ffffff;font-weight:bold;transform:scaleX(0.9907);transform-origin:0 0;">Verkaufte Einheiten</div>
<div class="a" style="left:663.5px;top:234.00px;width:16px;height:17px;background:#f0f0f0"></div>
<svg style="left:663.5px;top:234.00px" width="16" height="17"><polygon points="4.5,7.5 11.5,7.5 8,11.5" fill="#3a3a3a"/></svg>
<div class="t" style="left:683.50px;top:232.32px;font-size:19px;color:#ffffff;font-weight:bold;transform:scaleX(0.9735);transform-origin:0 0;">Nettoumsatz (USD)</div>
<div class="a" style="left:905px;top:234.00px;width:16px;height:17px;background:#f0f0f0"></div>
<svg style="left:905px;top:234.00px" width="16" height="17"><polygon points="4.5,7.5 11.5,7.5 8,11.5" fill="#3a3a3a"/></svg>
<div class="t" style="left:925.00px;top:232.32px;font-size:19px;color:#ffffff;font-weight:bold;transform:scaleX(1.0062);transform-origin:0 0;">Marketing</div>
<div class="a" style="left:35px;top:253.28px;width:998px;height:25.28px;background:#d9dff0;border-top:1px solid #a3afca"></div>
<div class="a" style="left:163.5px;top:253.28px;width:1px;height:25.28px;background:#c3cde3"></div>
<div class="a" style="left:293px;top:253.28px;width:1px;height:25.28px;background:#c3cde3"></div>
<div class="a" style="left:465px;top:253.28px;width:1px;height:25.28px;background:#c3cde3"></div>
<div class="a" style="left:680.5px;top:253.28px;width:1px;height:25.28px;background:#c3cde3"></div>
<div class="a" style="left:922px;top:253.28px;width:1px;height:25.28px;background:#c3cde3"></div>
<div class="t" style="left:77.45px;top:257.29px;font-size:19.6px;color:#111;">2024</div>
<div class="t" style="left:167.00px;top:257.29px;font-size:19.6px;color:#111;">Jan</div>
<div class="t" style="left:296.50px;top:257.29px;font-size:19.6px;color:#111;">Winterjacke</div>
<div class="t" style="left:646.45px;top:257.29px;font-size:19.6px;color:#111;">115</div>
<div class="t" style="left:858.55px;top:257.29px;font-size:19.6px;color:#111;">395,00</div>
<div class="a" style="left:35px;top:278.56px;width:998px;height:25.28px;background:#d9dff0;border-top:1px solid #a3afca"></div>
<div class="a" style="left:36px;top:278.56px;width:127px;height:25.28px;background:#b6bac4;border-top:1px solid #9ea3ae"></div>
<div class="a" style="left:163.5px;top:278.56px;width:1px;height:25.28px;background:#c3cde3"></div>
<div class="a" style="left:293px;top:278.56px;width:1px;height:25.28px;background:#c3cde3"></div>
<div class="a" style="left:465px;top:278.56px;width:1px;height:25.28px;background:#c3cde3"></div>
<div class="a" style="left:680.5px;top:278.56px;width:1px;height:25.28px;background:#c3cde3"></div>
<div class="a" style="left:922px;top:278.56px;width:1px;height:25.28px;background:#c3cde3"></div>
<div class="t" style="left:77.45px;top:282.57px;font-size:19.6px;color:#111;">2024</div>
<div class="t" style="left:167.00px;top:282.57px;font-size:19.6px;color:#111;">Feb</div>
<div class="t" style="left:296.50px;top:282.57px;font-size:19.6px;color:#111;">T-Shirt</div>
<div class="t" style="left:645.00px;top:282.57px;font-size:19.6px;color:#111;">210</div>
<div class="t" style="left:858.55px;top:282.57px;font-size:19.6px;color:#111;">190,47</div>
<div class="a" style="left:35px;top:303.84px;width:998px;height:25.28px;background:#d9dff0;border-top:1px solid #a3afca"></div>
<div class="a" style="left:36px;top:303.84px;width:127px;height:25.28px;background:#b6bac4;border-top:1px solid #9ea3ae"></div>
<div class="a" style="left:163.5px;top:303.84px;width:1px;height:25.28px;background:#c3cde3"></div>
<div class="a" style="left:293px;top:303.84px;width:1px;height:25.28px;background:#c3cde3"></div>
<div class="a" style="left:465px;top:303.84px;width:1px;height:25.28px;background:#c3cde3"></div>
<div class="a" style="left:680.5px;top:303.84px;width:1px;height:25.28px;background:#c3cde3"></div>
<div class="a" style="left:922px;top:303.84px;width:1px;height:25.28px;background:#c3cde3"></div>
<div class="t" style="left:77.45px;top:307.85px;font-size:19.6px;color:#111;">2024</div>
<div class="t" style="left:167.00px;top:307.85px;font-size:19.6px;color:#111;">Mär</div>
<div class="t" style="left:296.50px;top:307.85px;font-size:19.6px;color:#111;">Shorts</div>
<div class="t" style="left:645.00px;top:307.85px;font-size:19.6px;color:#111;">175</div>
<div class="t" style="left:858.55px;top:307.85px;font-size:19.6px;color:#111;">443,39</div>
<div class="a" style="left:35px;top:329.12px;width:998px;height:25.28px;background:#d9dff0;border-top:1px solid #a3afca"></div>
<div class="a" style="left:36px;top:329.12px;width:127px;height:25.28px;background:#b6bac4;border-top:1px solid #9ea3ae"></div>
<div class="a" style="left:163.5px;top:329.12px;width:1px;height:25.28px;background:#c3cde3"></div>
<div class="a" style="left:293px;top:329.12px;width:1px;height:25.28px;background:#c3cde3"></div>
<div class="a" style="left:465px;top:329.12px;width:1px;height:25.28px;background:#c3cde3"></div>
<div class="a" style="left:680.5px;top:329.12px;width:1px;height:25.28px;background:#c3cde3"></div>
<div class="a" style="left:922px;top:329.12px;width:1px;height:25.28px;background:#c3cde3"></div>
<div class="t" style="left:77.45px;top:333.13px;font-size:19.6px;color:#111;">2024</div>
<div class="t" style="left:167.00px;top:333.13px;font-size:19.6px;color:#111;">Apr</div>
<div class="t" style="left:296.50px;top:333.13px;font-size:19.6px;color:#111;">Pullover</div>
<div class="t" style="left:645.00px;top:333.13px;font-size:19.6px;color:#111;">220</div>
<div class="t" style="left:858.55px;top:333.13px;font-size:19.6px;color:#111;">194,30</div>
<div class="a" style="left:35px;top:354.40px;width:998px;height:25.28px;background:#d9dff0;border-top:1px solid #a3afca"></div>
<div class="a" style="left:36px;top:354.40px;width:127px;height:25.28px;background:#b6bac4;border-top:1px solid #9ea3ae"></div>
<div class="a" style="left:163.5px;top:354.40px;width:1px;height:25.28px;background:#c3cde3"></div>
<div class="a" style="left:293px;top:354.40px;width:1px;height:25.28px;background:#c3cde3"></div>
<div class="a" style="left:465px;top:354.40px;width:1px;height:25.28px;background:#c3cde3"></div>
<div class="a" style="left:680.5px;top:354.40px;width:1px;height:25.28px;background:#c3cde3"></div>
<div class="a" style="left:922px;top:354.40px;width:1px;height:25.28px;background:#c3cde3"></div>
<div class="t" style="left:77.45px;top:358.41px;font-size:19.6px;color:#111;">2024</div>
<div class="t" style="left:167.00px;top:358.41px;font-size:19.6px;color:#111;">Mai</div>
<div class="t" style="left:296.50px;top:358.41px;font-size:19.6px;color:#111;">Pullover</div>
<div class="t" style="left:645.00px;top:358.41px;font-size:19.6px;color:#111;">130</div>
<div class="t" style="left:858.55px;top:358.41px;font-size:19.6px;color:#111;">214,50</div>
<div class="a" style="left:35px;top:379.68px;width:998px;height:25.28px;background:#d9dff0;border-top:1px solid #a3afca"></div>
<div class="a" style="left:36px;top:379.68px;width:127px;height:25.28px;background:#b6bac4;border-top:1px solid #9ea3ae"></div>
<div class="a" style="left:163.5px;top:379.68px;width:1px;height:25.28px;background:#c3cde3"></div>
<div class="a" style="left:293px;top:379.68px;width:1px;height:25.28px;background:#c3cde3"></div>
<div class="a" style="left:465px;top:379.68px;width:1px;height:25.28px;background:#c3cde3"></div>
<div class="a" style="left:680.5px;top:379.68px;width:1px;height:25.28px;background:#c3cde3"></div>
<div class="a" style="left:922px;top:379.68px;width:1px;height:25.28px;background:#c3cde3"></div>
<div class="t" style="left:77.45px;top:383.69px;font-size:19.6px;color:#111;">2024</div>
<div class="t" style="left:167.00px;top:383.69px;font-size:19.6px;color:#111;">Mai</div>
<div class="t" style="left:296.50px;top:383.69px;font-size:19.6px;color:#111;">Winterjacke</div>
<div class="t" style="left:645.00px;top:383.69px;font-size:19.6px;color:#111;">175</div>
<div class="t" style="left:858.55px;top:383.69px;font-size:19.6px;color:#111;">795,00</div>
<div class="a" style="left:35px;top:404.96px;width:998px;height:25.28px;background:#d9dff0;border-top:1px solid #a3afca"></div>
<div class="a" style="left:36px;top:404.96px;width:127px;height:25.28px;background:#b6bac4;border-top:1px solid #9ea3ae"></div>
<div class="a" style="left:163.5px;top:404.96px;width:1px;height:25.28px;background:#c3cde3"></div>
<div class="a" style="left:293px;top:404.96px;width:1px;height:25.28px;background:#c3cde3"></div>
<div class="a" style="left:465px;top:404.96px;width:1px;height:25.28px;background:#c3cde3"></div>
<div class="a" style="left:680.5px;top:404.96px;width:1px;height:25.28px;background:#c3cde3"></div>
<div class="a" style="left:922px;top:404.96px;width:1px;height:25.28px;background:#c3cde3"></div>
<div class="t" style="left:77.45px;top:408.97px;font-size:19.6px;color:#111;">2024</div>
<div class="t" style="left:167.00px;top:408.97px;font-size:19.6px;color:#111;">Jun</div>
<div class="t" style="left:296.50px;top:408.97px;font-size:19.6px;color:#111;">T-Shirt</div>
<div class="t" style="left:645.00px;top:408.97px;font-size:19.6px;color:#111;">225</div>
<div class="t" style="left:858.55px;top:408.97px;font-size:19.6px;color:#111;">309,24</div>
<div class="a" style="left:35px;top:430.24px;width:998px;height:25.28px;background:#d9dff0;border-top:1px solid #a3afca"></div>
<div class="a" style="left:36px;top:430.24px;width:127px;height:25.28px;background:#b6bac4;border-top:1px solid #9ea3ae"></div>
<div class="a" style="left:163.5px;top:430.24px;width:1px;height:25.28px;background:#c3cde3"></div>
<div class="a" style="left:293px;top:430.24px;width:1px;height:25.28px;background:#c3cde3"></div>
<div class="a" style="left:465px;top:430.24px;width:1px;height:25.28px;background:#c3cde3"></div>
<div class="a" style="left:680.5px;top:430.24px;width:1px;height:25.28px;background:#c3cde3"></div>
<div class="a" style="left:922px;top:430.24px;width:1px;height:25.28px;background:#c3cde3"></div>
<div class="t" style="left:77.45px;top:434.25px;font-size:19.6px;color:#111;">2024</div>
<div class="t" style="left:167.00px;top:434.25px;font-size:19.6px;color:#111;">Jun</div>
<div class="t" style="left:296.50px;top:434.25px;font-size:19.6px;color:#111;">Shorts</div>
<div class="t" style="left:645.00px;top:434.25px;font-size:19.6px;color:#111;">190</div>
<div class="t" style="left:858.55px;top:434.25px;font-size:19.6px;color:#111;">542,69</div>
<div class="a" style="left:35px;top:455.52px;width:998px;height:25.28px;background:#d9dff0;border-top:1px solid #a3afca"></div>
<div class="a" style="left:36px;top:455.52px;width:127px;height:25.28px;background:#b6bac4;border-top:1px solid #9ea3ae"></div>
<div class="a" style="left:163.5px;top:455.52px;width:1px;height:25.28px;background:#c3cde3"></div>
<div class="a" style="left:293px;top:455.52px;width:1px;height:25.28px;background:#c3cde3"></div>
<div class="a" style="left:465px;top:455.52px;width:1px;height:25.28px;background:#c3cde3"></div>
<div class="a" style="left:680.5px;top:455.52px;width:1px;height:25.28px;background:#c3cde3"></div>
<div class="a" style="left:922px;top:455.52px;width:1px;height:25.28px;background:#c3cde3"></div>
<div class="t" style="left:77.45px;top:459.53px;font-size:19.6px;color:#111;">2024</div>
<div class="t" style="left:167.00px;top:459.53px;font-size:19.6px;color:#111;">Jun</div>
<div class="t" style="left:296.50px;top:459.53px;font-size:19.6px;color:#111;">Pullover</div>
<div class="t" style="left:645.00px;top:459.53px;font-size:19.6px;color:#111;">210</div>
<div class="t" style="left:858.55px;top:459.53px;font-size:19.6px;color:#111;">216,50</div>
<div class="a" style="left:35px;top:480.80px;width:998px;height:25.28px;background:#d9dff0;border-top:1px solid #a3afca"></div>
<div class="a" style="left:36px;top:480.80px;width:127px;height:25.28px;background:#b6bac4;border-top:1px solid #9ea3ae"></div>
<div class="a" style="left:163.5px;top:480.80px;width:1px;height:25.28px;background:#c3cde3"></div>
<div class="a" style="left:293px;top:480.80px;width:1px;height:25.28px;background:#c3cde3"></div>
<div class="a" style="left:465px;top:480.80px;width:1px;height:25.28px;background:#c3cde3"></div>
<div class="a" style="left:680.5px;top:480.80px;width:1px;height:25.28px;background:#c3cde3"></div>
<div class="a" style="left:922px;top:480.80px;width:1px;height:25.28px;background:#c3cde3"></div>
<div class="t" style="left:77.45px;top:484.81px;font-size:19.6px;color:#111;">2024</div>
<div class="t" style="left:167.00px;top:484.81px;font-size:19.6px;color:#111;">Jul</div>
<div class="t" style="left:296.50px;top:484.81px;font-size:19.6px;color:#111;">Winterjacke</div>
<div class="t" style="left:645.00px;top:484.81px;font-size:19.6px;color:#111;">166</div>
<div class="t" style="left:858.55px;top:484.81px;font-size:19.6px;color:#111;">781,55</div>
<div class="a" style="left:35px;top:506.08px;width:998px;height:25.28px;background:#d9dff0;border-top:1px solid #a3afca"></div>
<div class="a" style="left:36px;top:506.08px;width:127px;height:25.28px;background:#b6bac4;border-top:1px solid #9ea3ae"></div>
<div class="a" style="left:163.5px;top:506.08px;width:1px;height:25.28px;background:#c3cde3"></div>
<div class="a" style="left:293px;top:506.08px;width:1px;height:25.28px;background:#c3cde3"></div>
<div class="a" style="left:465px;top:506.08px;width:1px;height:25.28px;background:#c3cde3"></div>
<div class="a" style="left:680.5px;top:506.08px;width:1px;height:25.28px;background:#c3cde3"></div>
<div class="a" style="left:922px;top:506.08px;width:1px;height:25.28px;background:#c3cde3"></div>
<div class="t" style="left:77.45px;top:510.09px;font-size:19.6px;color:#111;">2024</div>
<div class="t" style="left:167.00px;top:510.09px;font-size:19.6px;color:#111;">Jul</div>
<div class="t" style="left:296.50px;top:510.09px;font-size:19.6px;color:#111;">T-Shirt</div>
<div class="t" style="left:645.00px;top:510.09px;font-size:19.6px;color:#111;">204</div>
<div class="t" style="left:858.55px;top:510.09px;font-size:19.6px;color:#111;">358,92</div>
<div class="a" style="left:35px;top:531.36px;width:998px;height:25.28px;background:#d9dff0;border-top:1px solid #a3afca"></div>
<div class="a" style="left:36px;top:531.36px;width:127px;height:25.28px;background:#b6bac4;border-top:1px solid #9ea3ae"></div>
<div class="a" style="left:163.5px;top:531.36px;width:1px;height:25.28px;background:#c3cde3"></div>
<div class="a" style="left:293px;top:531.36px;width:1px;height:25.28px;background:#c3cde3"></div>
<div class="a" style="left:465px;top:531.36px;width:1px;height:25.28px;background:#c3cde3"></div>
<div class="a" style="left:680.5px;top:531.36px;width:1px;height:25.28px;background:#c3cde3"></div>
<div class="a" style="left:922px;top:531.36px;width:1px;height:25.28px;background:#c3cde3"></div>
<div class="t" style="left:77.45px;top:535.37px;font-size:19.6px;color:#111;">2024</div>
<div class="t" style="left:167.00px;top:535.37px;font-size:19.6px;color:#111;">Aug</div>
<div class="t" style="left:296.50px;top:535.37px;font-size:19.6px;color:#111;">Shorts</div>
<div class="t" style="left:645.00px;top:535.37px;font-size:19.6px;color:#111;">140</div>
<div class="t" style="left:858.55px;top:535.37px;font-size:19.6px;color:#111;">295,56</div>
<div class="a" style="left:35px;top:556.64px;width:998px;height:25.28px;background:#d9dff0;border-top:1px solid #a3afca"></div>
<div class="a" style="left:36px;top:556.64px;width:127px;height:25.28px;background:#b6bac4;border-top:1px solid #9ea3ae"></div>
<div class="a" style="left:163.5px;top:556.64px;width:1px;height:25.28px;background:#c3cde3"></div>
<div class="a" style="left:293px;top:556.64px;width:1px;height:25.28px;background:#c3cde3"></div>
<div class="a" style="left:465px;top:556.64px;width:1px;height:25.28px;background:#c3cde3"></div>
<div class="a" style="left:680.5px;top:556.64px;width:1px;height:25.28px;background:#c3cde3"></div>
<div class="a" style="left:922px;top:556.64px;width:1px;height:25.28px;background:#c3cde3"></div>
<div class="t" style="left:77.45px;top:560.65px;font-size:19.6px;color:#111;">2024</div>
<div class="t" style="left:167.00px;top:560.65px;font-size:19.6px;color:#111;">Aug</div>
<div class="t" style="left:296.50px;top:560.65px;font-size:19.6px;color:#111;">Pullover</div>
<div class="t" style="left:645.00px;top:560.65px;font-size:19.6px;color:#111;">137</div>
<div class="t" style="left:858.55px;top:560.65px;font-size:19.6px;color:#111;">300,15</div>
<div class="a" style="left:35px;top:581.92px;width:998px;height:25.28px;background:#d9dff0;border-top:1px solid #a3afca"></div>
<div class="a" style="left:36px;top:581.92px;width:127px;height:25.28px;background:#b6bac4;border-top:1px solid #9ea3ae"></div>
<div class="a" style="left:163.5px;top:581.92px;width:1px;height:25.28px;background:#c3cde3"></div>
<div class="a" style="left:293px;top:581.92px;width:1px;height:25.28px;background:#c3cde3"></div>
<div class="a" style="left:465px;top:581.92px;width:1px;height:25.28px;background:#c3cde3"></div>
<div class="a" style="left:680.5px;top:581.92px;width:1px;height:25.28px;background:#c3cde3"></div>
<div class="a" style="left:922px;top:581.92px;width:1px;height:25.28px;background:#c3cde3"></div>
<div class="t" style="left:77.45px;top:585.93px;font-size:19.6px;color:#111;">2024</div>
<div class="t" style="left:167.00px;top:585.93px;font-size:19.6px;color:#111;">Sep</div>
<div class="t" style="left:296.50px;top:585.93px;font-size:19.6px;color:#111;">Winterjacke</div>
<div class="t" style="left:645.00px;top:585.93px;font-size:19.6px;color:#111;">156</div>
<div class="t" style="left:858.55px;top:585.93px;font-size:19.6px;color:#111;">800,93</div>
<div class="a" style="left:35px;top:607.20px;width:998px;height:25.28px;background:#d9dff0;border-top:1px solid #a3afca"></div>
<div class="a" style="left:36px;top:607.20px;width:127px;height:25.28px;background:#b6bac4;border-top:1px solid #9ea3ae"></div>
<div class="a" style="left:163.5px;top:607.20px;width:1px;height:25.28px;background:#c3cde3"></div>
<div class="a" style="left:293px;top:607.20px;width:1px;height:25.28px;background:#c3cde3"></div>
<div class="a" style="left:465px;top:607.20px;width:1px;height:25.28px;background:#c3cde3"></div>
<div class="a" style="left:680.5px;top:607.20px;width:1px;height:25.28px;background:#c3cde3"></div>
<div class="a" style="left:922px;top:607.20px;width:1px;height:25.28px;background:#c3cde3"></div>
<div class="t" style="left:77.45px;top:611.21px;font-size:19.6px;color:#111;">2024</div>
<div class="t" style="left:167.00px;top:611.21px;font-size:19.6px;color:#111;">Sep</div>
<div class="t" style="left:296.50px;top:611.21px;font-size:19.6px;color:#111;">Winterjacke</div>
<div class="t" style="left:645.00px;top:611.21px;font-size:19.6px;color:#111;">179</div>
<div class="t" style="left:858.55px;top:611.21px;font-size:19.6px;color:#111;">309,13</div>
<div class="a" style="left:35px;top:632.48px;width:998px;height:25.28px;background:#d9dff0;border-top:1px solid #a3afca"></div>
<div class="a" style="left:36px;top:632.48px;width:127px;height:25.28px;background:#b6bac4;border-top:1px solid #9ea3ae"></div>
<div class="a" style="left:163.5px;top:632.48px;width:1px;height:25.28px;background:#c3cde3"></div>
<div class="a" style="left:293px;top:632.48px;width:1px;height:25.28px;background:#c3cde3"></div>
<div class="a" style="left:465px;top:632.48px;width:1px;height:25.28px;background:#c3cde3"></div>
<div class="a" style="left:680.5px;top:632.48px;width:1px;height:25.28px;background:#c3cde3"></div>
<div class="a" style="left:922px;top:632.48px;width:1px;height:25.28px;background:#c3cde3"></div>
<div class="t" style="left:77.45px;top:636.49px;font-size:19.6px;color:#111;">2024</div>
<div class="t" style="left:167.00px;top:636.49px;font-size:19.6px;color:#111;">Sep</div>
<div class="t" style="left:296.50px;top:636.49px;font-size:19.6px;color:#111;">T-Shirt</div>
<div class="t" style="left:645.00px;top:636.49px;font-size:19.6px;color:#111;">214</div>
<div class="t" style="left:858.55px;top:636.49px;font-size:19.6px;color:#111;">386,21</div>
<div class="a" style="left:35px;top:657.76px;width:998px;height:25.28px;background:#d9dff0;border-top:1px solid #a3afca"></div>
<div class="a" style="left:36px;top:657.76px;width:127px;height:25.28px;background:#b6bac4;border-top:1px solid #9ea3ae"></div>
<div class="a" style="left:163.5px;top:657.76px;width:1px;height:25.28px;background:#c3cde3"></div>
<div class="a" style="left:293px;top:657.76px;width:1px;height:25.28px;background:#c3cde3"></div>
<div class="a" style="left:465px;top:657.76px;width:1px;height:25.28px;background:#c3cde3"></div>
<div class="a" style="left:680.5px;top:657.76px;width:1px;height:25.28px;background:#c3cde3"></div>
<div class="a" style="left:922px;top:657.76px;width:1px;height:25.28px;background:#c3cde3"></div>
<div class="t" style="left:77.45px;top:661.77px;font-size:19.6px;color:#111;">2024</div>
<div class="t" style="left:167.00px;top:661.77px;font-size:19.6px;color:#111;">Okt</div>
<div class="t" style="left:296.50px;top:661.77px;font-size:19.6px;color:#111;">Shorts</div>
<div class="t" style="left:645.00px;top:661.77px;font-size:19.6px;color:#111;">166</div>
<div class="t" style="left:858.55px;top:661.77px;font-size:19.6px;color:#111;">475,83</div>
<div class="a" style="left:35px;top:683.04px;width:998px;height:25.28px;background:#d9dff0;border-top:1px solid #a3afca"></div>
<div class="a" style="left:36px;top:683.04px;width:127px;height:25.28px;background:#b6bac4;border-top:1px solid #9ea3ae"></div>
<div class="a" style="left:163.5px;top:683.04px;width:1px;height:25.28px;background:#c3cde3"></div>
<div class="a" style="left:293px;top:683.04px;width:1px;height:25.28px;background:#c3cde3"></div>
<div class="a" style="left:465px;top:683.04px;width:1px;height:25.28px;background:#c3cde3"></div>
<div class="a" style="left:680.5px;top:683.04px;width:1px;height:25.28px;background:#c3cde3"></div>
<div class="a" style="left:922px;top:683.04px;width:1px;height:25.28px;background:#c3cde3"></div>
<div class="t" style="left:77.45px;top:687.05px;font-size:19.6px;color:#111;">2024</div>
<div class="t" style="left:167.00px;top:687.05px;font-size:19.6px;color:#111;">Okt</div>
<div class="t" style="left:296.50px;top:687.05px;font-size:19.6px;color:#111;">Pullover</div>
<div class="t" style="left:645.00px;top:687.05px;font-size:19.6px;color:#111;">132</div>
<div class="t" style="left:858.55px;top:687.05px;font-size:19.6px;color:#111;">826,59</div>
<div class="a" style="left:35px;top:708.32px;width:998px;height:25.28px;background:#d9dff0;border-top:1px solid #a3afca"></div>
<div class="a" style="left:36px;top:708.32px;width:127px;height:25.28px;background:#b6bac4;border-top:1px solid #9ea3ae"></div>
<div class="a" style="left:163.5px;top:708.32px;width:1px;height:25.28px;background:#c3cde3"></div>
<div class="a" style="left:293px;top:708.32px;width:1px;height:25.28px;background:#c3cde3"></div>
<div class="a" style="left:465px;top:708.32px;width:1px;height:25.28px;background:#c3cde3"></div>
<div class="a" style="left:680.5px;top:708.32px;width:1px;height:25.28px;background:#c3cde3"></div>
<div class="a" style="left:922px;top:708.32px;width:1px;height:25.28px;background:#c3cde3"></div>
<div class="t" style="left:77.45px;top:712.33px;font-size:19.6px;color:#111;">2024</div>
<div class="t" style="left:167.00px;top:712.33px;font-size:19.6px;color:#111;">Nov</div>
<div class="t" style="left:296.50px;top:712.33px;font-size:19.6px;color:#111;">Winterjacke</div>
<div class="t" style="left:645.00px;top:712.33px;font-size:19.6px;color:#111;">176</div>
<div class="t" style="left:858.55px;top:712.33px;font-size:19.6px;color:#111;">593,99</div>
<div class="a" style="left:35px;top:228.00px;width:129px;height:26.28px;border:1px solid #a6dcc4;outline:1px solid #2e6a48"></div>
<div class="a" style="left:35px;top:253.28px;width:1px;height:470px;background:#6aa88a"></div>
<div class="a" style="left:1037px;top:205px;width:15px;height:514px;background:#1a1a1a;border-radius:5px"></div>
<svg style="left:1037px;top:205px" width="15" height="14"><path d="M3.5,11 A4,4 0 0 1 11.5,11 Z" fill="#a8a8a8"/></svg>
<div class="a" style="left:1040px;top:219px;width:9px;height:131px;background:#9a9a9a;border-radius:5px"></div>
<svg style="left:1037px;top:704px" width="15" height="14"><polygon points="3.5,4 11.5,4 7.5,9" fill="#a8a8a8"/></svg>
<div class="a" style="left:1063px;top:204px;width:1.5px;height:542px;background:#3a3a3a"></div>
<div class="a" style="left:1065px;top:198px;width:343px;height:548px;background:#0e0e0e"></div>
<div class="t" style="left:1079.30px;top:217.18px;font-size:24px;color:#f0f0f0;transform:scaleX(1.0266);transform-origin:0 0;">Copilot</div>
<svg style="left:1333px;top:224px" width="18" height="4"><circle cx="2" cy="2" r="1.5" fill="#e0e0e0"/><circle cx="8.5" cy="2" r="1.5" fill="#e0e0e0"/><circle cx="15" cy="2" r="1.5" fill="#e0e0e0"/></svg>
<svg style="left:1377.5px;top:220.5px" width="13" height="13"><path d="M0.6,0.6 L12.2,12.2 M12.2,0.6 L0.6,12.2" stroke="#e8e8e8" stroke-width="1.4"/></svg>
<div class="a" style="left:1080px;top:260px;width:272px;height:63px;border-radius:12px 12px 12px 0;background:#2b2b2b"></div>
<div class="t" style="left:1095.10px;top:272.43px;font-size:16.5px;color:#f0f0f0;transform:scaleX(1.0426);transform-origin:0 0;">Fertig! Womit kann ich dir noch</div>
<div class="t" style="left:1095.10px;top:295.23px;font-size:16.5px;color:#f0f0f0;transform:scaleX(0.9883);transform-origin:0 0;">helfen?</div>
<div class="a" style="left:1154.5px;top:340.5px;width:239.5px;height:40.5px;border-radius:12px 12px 0 12px;background:#115eb0"></div>
<svg style="left:1167.5px;top:351.5px" width="18" height="18" fill="none" stroke="#f2f2f2" stroke-width="1.3" stroke-linejoin="round">
<path d="M1,4.5 V15.5 A1.5,1.5 0 0 0 2.5,17 H14.5 A1.5,1.5 0 0 0 16,15.5 V11"/><path d="M4.5,12.5 C5,8 8,6 12,6 V3 L16.8,7.5 L12,12 V9 C9,9 6.5,10 4.5,12.5 Z"/></svg>
<div class="t" style="left:1194.80px;top:353.11px;font-size:17px;color:#ffffff;transform:scaleX(0.9879);transform-origin:0 0;">Dateneinblicke anzeigen</div>
<div class="t" style="left:1107.00px;top:394.80px;font-size:13px;color:#d6d6d6;transform:scaleX(1.0416);transform-origin:0 0;">KI-generierte Inhalte können fehlerhaft sein</div>
<div class="a" style="left:1080px;top:437.5px;width:272px;height:175px;border-radius:12px 12px 0 0;background:#2b2b2b"></div>
<div class="t" style="left:1094.60px;top:450.63px;font-size:16.5px;color:#f0f0f0;transform:scaleX(1.0112);transform-origin:0 0;">Ich habe die Daten in A1:F37</div>
<div class="t" style="left:1094.60px;top:472.93px;font-size:16.5px;color:#f0f0f0;transform:scaleX(1.0130);transform-origin:0 0;">analysiert, und hier ist, was ich</div>
<div class="t" style="left:1094.60px;top:495.53px;font-size:16.5px;color:#f0f0f0;transform:scaleX(1.0244);transform-origin:0 0;">gefunden habe:</div>
<div class="t" style="left:1094.60px;top:540.93px;font-size:16.5px;color:#f0f0f0;font-weight:bold;">"Verkaufte Einheiten" nach</div>
<div class="t" style="left:1094.60px;top:563.73px;font-size:16.5px;color:#f0f0f0;font-weight:bold;transform:scaleX(1.0246);transform-origin:0 0;">"Monat".</div>
<div class="a" style="left:1080px;top:600px;width:272px;height:12px;overflow:hidden"><div class="t" style="left:43.00px;top:8.03px;font-size:16.5px;color:#e8e8e8;transform:scaleX(0.9752);transform-origin:0 0;">Höchste Verkäufe im Juli mit</div></div>
<div class="a" style="left:1080px;top:627px;width:314px;height:105px;border-radius:8px 8px 4px 4px;background:#ffffff;border-bottom:2.5px solid #1d5a9c"></div>
<div class="a" style="left:1092px;top:640px;width:1.2px;height:19px;background:#333"></div>
<div class="t" style="left:1093.40px;top:642.38px;font-size:15.5px;color:#5e5e5e;">Dateneinblicke anzeigen ...</div>
<svg style="left:1364px;top:639px" width="15" height="20" fill="none" stroke="#23588e" stroke-width="1.4">
<rect x="4" y="0.8" width="7" height="12" rx="3.5"/><path d="M1,9 A6.5,6.5 0 0 0 14,9 M7.5,15.5 V19"/></svg>
<svg style="left:1092.5px;top:701px" width="19" height="18" fill="none" stroke="#262626" stroke-width="1.3" stroke-linejoin="round">
<path d="M1,5.5 A1.5,1.5 0 0 1 2.5,4 H5.5 L7,1.5 H12 L13.5,4 H16.5 A1.5,1.5 0 0 1 18,5.5 V15 A1.5,1.5 0 0 1 16.5,16.5 H2.5 A1.5,1.5 0 0 1 1,15 Z"/><circle cx="9.5" cy="10" r="3.3"/></svg>
<svg style="left:1132.5px;top:700px" width="15" height="20" fill="none" stroke="#262626" stroke-width="1.3">
<rect x="4" y="0.8" width="7" height="12" rx="3.5"/><path d="M1,9 A6.5,6.5 0 0 0 14,9 M7.5,15.5 V19"/></svg>
<svg style="left:1168.5px;top:701px" width="18" height="18" fill="none" stroke="#262626" stroke-width="1.3" stroke-linejoin="round">
<path d="M3,1 H15 A2,2 0 0 1 17,3 V10 L10,17 H3 A2,2 0 0 1 1,15 V3 A2,2 0 0 1 3,1 Z"/><path d="M10,17 V12 A2,2 0 0 1 12,10 H17"/><path d="M4.5,8.5 C6,11 9,11 10.5,8.5 M5,5.5 H7 M9.5,5.5 H11.5"/></svg>
<svg style="left:1361.5px;top:701px" width="20" height="18" fill="none" stroke="#b8b8b8" stroke-width="1.2" stroke-linejoin="round">
<path d="M1,1 L19,9 L1,17 L4,9 Z M4,9 H19"/></svg>
<div class="a" style="left:0;top:719px;width:1063px;height:27px;background:#0b0b0b"></div>
<div class="a" style="left:1065px;top:735px;width:343px;height:11px;background:#0e0e0e"></div>
<svg style="left:24px;top:726px" width="50" height="14"><path d="M8,3 L4,7 L8,11" stroke="#9a9a9a" stroke-width="1.3" fill="none"/><path d="M32,3 L36,7 L32,11" stroke="#9a9a9a" stroke-width="1.3" fill="none"/></svg>
<div class="a" style="left:102px;top:719px;width:62px;height:24px;background:#f4f4f4;border-radius:0 0 4px 4px"></div>
<div class="t" style="left:111.00px;top:723.15px;font-size:14px;color:#1f6b3e;font-weight:bold;transform:scaleX(1.0676);transform-origin:0 0;">Monat</div>
<div class="a" style="left:107px;top:739px;width:52px;height:2px;background:#237040"></div>
<svg style="left:199px;top:723px" width="18" height="18"><circle cx="9" cy="9" r="7.5" stroke="#d0d0d0" stroke-width="1.2" fill="none"/><path d="M9,5 V13 M5,9 H13" stroke="#d0d0d0" stroke-width="1.2"/></svg>
<svg style="left:621.5px;top:726px" width="4" height="14"><circle cx="2" cy="2" r="1.3" fill="#dcdcdc"/><circle cx="2" cy="7" r="1.3" fill="#dcdcdc"/><circle cx="2" cy="12" r="1.3" fill="#dcdcdc"/></svg>
<div class="a" style="left:638px;top:725px;width:396px;height:15px;background:#1a1a1a;border-radius:5px"></div>
<svg style="left:638px;top:725px" width="396" height="15"><polygon points="11,3.5 11,11.5 6,7.5" fill="#b0b0b0"/><polygon points="385,3.5 385,11.5 390,7.5" fill="#b0b0b0"/></svg>
<div class="a" style="left:712.5px;top:728px;width:237px;height:9px;background:#9a9a9a;border-radius:5px"></div>
<div class="a" style="left:0;top:746px;width:1408px;height:22px;background:#151515;border-top:1px solid #262626"></div>
<div class="t" style="left:7.50px;top:752.72px;font-size:12.5px;color:#dcdcdc;transform:scaleX(0.9566);transform-origin:0 0;">Arbeitsmappenstatistik</div>
<div class="t" style="left:792.60px;top:753.02px;font-size:12.5px;color:#dcdcdc;transform:scaleX(0.9324);transform-origin:0 0;">Mittelwert: 2515,541667</div>
<div class="t" style="left:933.10px;top:753.02px;font-size:12.5px;color:#dcdcdc;transform:scaleX(0.9042);transform-origin:0 0;">Anzahl: 222</div>
<div class="t" style="left:1009.10px;top:753.02px;font-size:12.5px;color:#dcdcdc;transform:scaleX(0.9049);transform-origin:0 0;">Summe: 262238</div>
<div class="a" style="left:1103px;top:747px;width:38px;height:21px;background:#2e2e2e"></div>
<svg style="left:1115px;top:751.5px" width="15" height="14" fill="none" stroke="#e0e0e0" stroke-width="1.1">
<rect x="0.6" y="0.6" width="13.5" height="12.5"/><path d="M5,0.6 V13 M9.5,0.6 V13 M0.6,4.8 H14 M0.6,9 H14"/></svg>
<svg style="left:1153px;top:751.5px" width="15" height="14" fill="none" stroke="#d0d0d0" stroke-width="1.1">
<rect x="0.6" y="0.6" width="13.5" height="12.5"/><rect x="3" y="3" width="8.5" height="7.5" stroke-width="0.8"/><path d="M5.5,3 V10.5 M8.5,3 V10.5 M3,6.8 H11.5" stroke-width="0.6"/></svg>
<svg style="left:1190px;top:751.5px" width="15" height="14" fill="none" stroke="#d0d0d0" stroke-width="1.1">
<rect x="0.6" y="0.6" width="13.5" height="12.5"/><path d="M0.6,8.5 H7 V0.6 M4,3 V6 M9,3 V6"/></svg>
<div class="a" style="left:1223px;top:757px;width:7px;height:1.3px;background:#cfcfcf"></div>
<div class="a" style="left:1236px;top:757px;width:100px;height:1.5px;background:#a8a8a8"></div>
<div class="a" style="left:1283.5px;top:752px;width:4px;height:12px;background:#bdbdbd;border-radius:1px"></div>
<svg style="left:1342px;top:753.5px" width="9" height="9"><path d="M4.5,0 V9 M0,4.5 H9" stroke="#d0d0d0" stroke-width="1.3"/></svg>
<div class="t" style="left:1363.50px;top:751.92px;font-size:12.5px;color:#dcdcdc;transform:scaleX(0.8914);transform-origin:0 0;">100%</div>
</div></body></html>
